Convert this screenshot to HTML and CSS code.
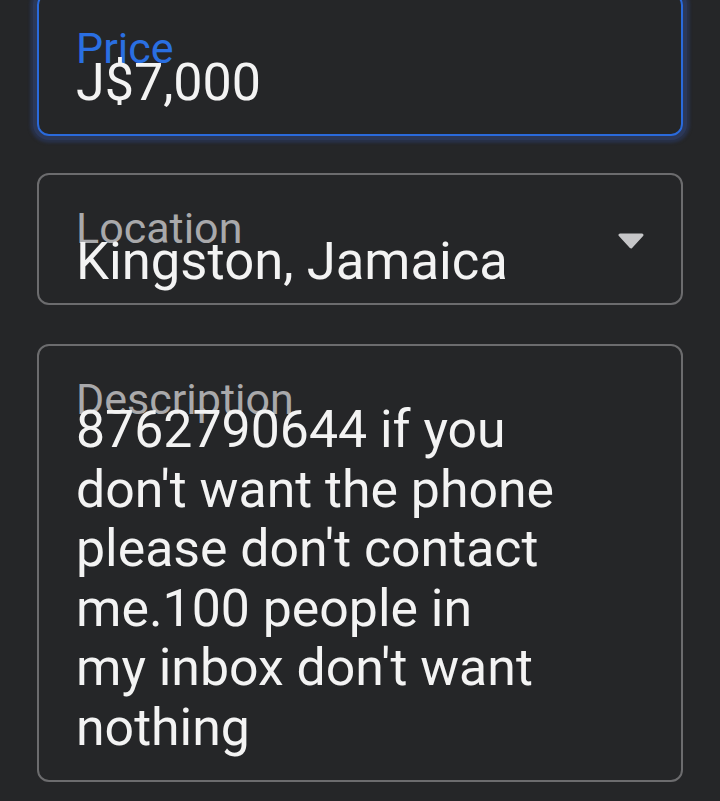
FILE: index.html
```html
<!DOCTYPE html>
<html lang="en">
<head>
  <meta charset="UTF-8" />
  <meta name="viewport" content="width=device-width, initial-scale=1" />
  <title>Edit listing</title>
  <link rel="stylesheet" href="styles.css">
</head>
<body>

  <form class="listing-form">
    <div class="field field-price focused">
      <div class="field-text">
        <label class="field-label">Price</label>
        <div class="field-value">J$7,000</div>
      </div>
    </div>

    <div class="field field-select">
      <div class="field-text">
        <label class="field-label">Location</label>
        <div class="field-value">Kingston, Jamaica</div>
      </div>
      <svg class="caret" width="28" height="16" viewBox="0 0 28 16">
        <path d="M3 2 L25 2 L14 14 Z" fill="#c6c6c8" stroke="#c6c6c8" stroke-width="3" stroke-linejoin="round" />
      </svg>
    </div>

    <div class="field field-area">
      <div class="field-text">
        <label class="field-label">Description</label>
        <div class="field-value">8762790644 if you<br>don't want the phone<br>please don't contact<br>me.100 people in<br>my inbox don't want<br>nothing</div>
      </div>
    </div>
  </form>

</body>
</html>
```

FILE: styles.css
```css
:root {
  --bg: #252628;
  --border: #6c6c6e;
  --focus: #2a6adc;
  --label: #a9a9ab;
  --text: #f3f3f3;
}

html, body {
  margin: 0;
  background: var(--bg);
  height: 100%;
  overflow: hidden;
}

body {
  font-family: Roboto, "Noto Sans", sans-serif;
  color: var(--text);
}

.listing-form {
  display: flex;
  flex-direction: column;
  gap: 37px;
  padding: 0 37px;
  margin-top: -7px;
}

.field {
  display: flex;
  align-items: center;
  border: 2px solid var(--border);
  border-radius: 12px;
  padding: 39px 36px 22px 37px;
}

.field-text {
  flex: 1;
  min-width: 0;
}

.field-label {
  display: block;
  font-size: 43px;
  line-height: 28px;
  color: var(--label);
}

.field-value {
  font-size: 52.6px;
  line-height: 39px;
  color: var(--text);
}

.focused {
  border-color: var(--focus);
  box-shadow: 0 0 0 4px #2c3858, 0 0 3px 7px #283149;
  padding-bottom: 33px;
}

.focused .field-label {
  color: #2a6fe2;
}

.focused .field-value {
  font-size: 52px;
  line-height: 41px;
  margin-bottom: -2px;
}

.field-select + .field-area {
  margin-top: 2px;
}

.caret {
  flex: none;
  margin-top: -14px;
}

.field-area {
  align-items: flex-start;
  padding-bottom: 22px;
}

.field-area .field-value {
  font-size: 51.8px;
  line-height: 59.6px;
  margin-top: -13px;
}
```
